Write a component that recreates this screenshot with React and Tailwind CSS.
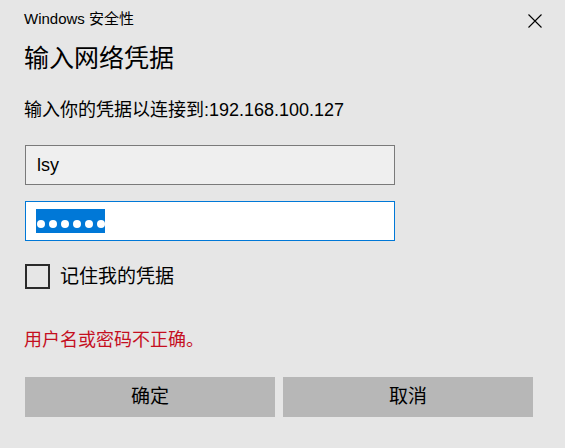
import React from "react";

export default function App() {
  const font = { fontFamily: '"Liberation Sans", "Noto Sans CJK SC", sans-serif' };
  return (
    <div
      className="w-[565px] h-[448px] bg-[#e6e6e6] text-black flex flex-col pl-[24px] overflow-hidden"
      style={font}
    >
      <div className="flex justify-between items-start pt-[8px] pr-[23px]">
        <div className="text-[15px] leading-[21px] text-[#000]">Windows 安全性</div>
        <svg width="14" height="14" viewBox="0 0 14 14" className="mt-[6px]">
          <path d="M0.5 0.5 L13.5 13.5 M13.5 0.5 L0.5 13.5" stroke="#000" strokeWidth="1.1" fill="none" />
        </svg>
      </div>
      <div className="mt-[13px] text-[25px] leading-[32px]">输入网络凭据</div>
      <div className="mt-[24px] text-[18px] leading-[24px]">输入你的凭据以连接到:192.168.100.127</div>
      <div className="mt-[23px] ml-[1px] w-[370px] h-[40px] border border-[#7a7a7a] bg-[#efefef] flex items-center pl-[11px] text-[18px]">
        lsy
      </div>
      <div className="mt-[16px] ml-[1px] w-[370px] h-[40px] border border-[#0078d7] bg-white flex items-center pl-[10px]">
        <div className="h-[24px] w-[69px] bg-[#0078d7] flex items-center gap-[4px] pl-[1px] pt-[6px]">
          {[0, 1, 2, 3, 4, 5].map((i) => (
            <div key={i} className="w-[8px] h-[8px] rounded-full bg-white" />
          ))}
        </div>
      </div>
      <div className="mt-[23px] ml-[1px] flex items-center h-[25px]">
        <div className="w-[25px] h-[25px] border-2 border-[#2b2b2b]" />
        <div className="ml-[10px] text-[19px] leading-[24px]">记住我的凭据</div>
      </div>
      <div className="mt-[39px] text-[18px] leading-[24px] text-[#c50f1f]">用户名或密码不正确。</div>
      <div className="mt-[25px] ml-[1px] flex gap-[8px]">
        <div className="w-[250px] h-[40px] bg-[#b7b7b7] flex items-center justify-center text-[19px]">确定</div>
        <div className="w-[250px] h-[40px] bg-[#b7b7b7] flex items-center justify-center text-[19px]">取消</div>
      </div>
    </div>
  );
}
